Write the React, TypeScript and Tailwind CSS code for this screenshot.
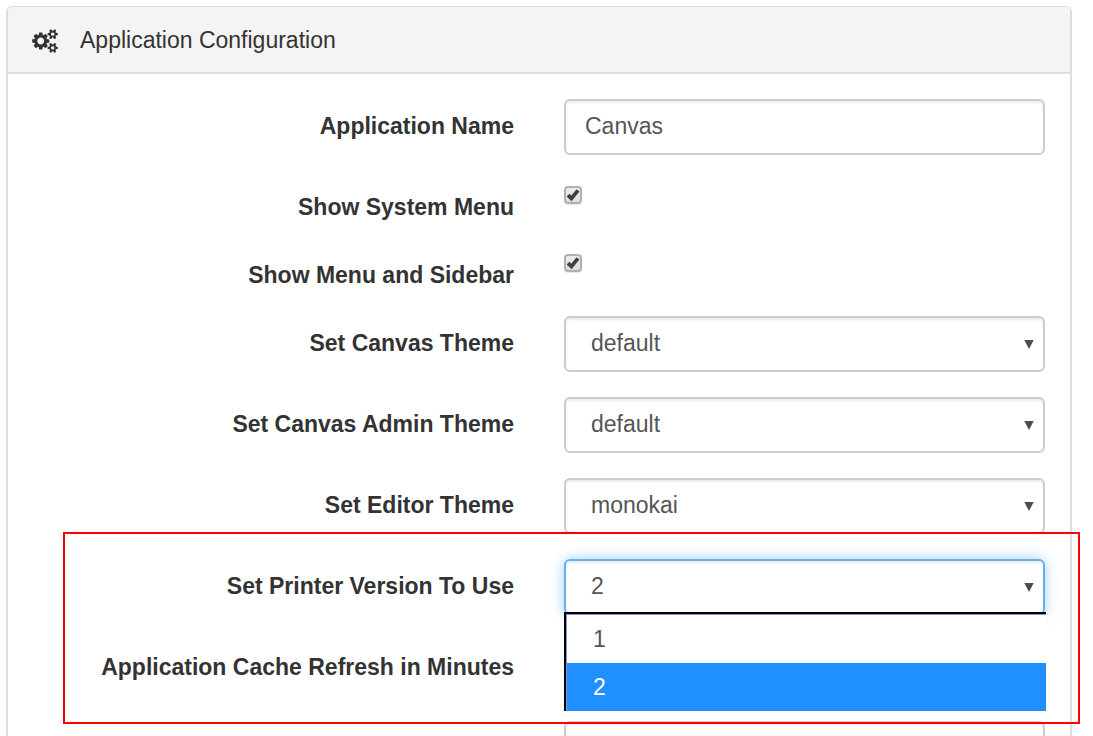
import React from "react";

const controlClass =
  "block h-14 w-full appearance-none rounded-md border-2 border-[#ccc] bg-white pb-0.5 text-[23px] leading-8 text-[#555] shadow-[inset_0_2px_2px_rgba(0,0,0,0.075)] outline-none";

const focusClass =
  "block h-14 w-full appearance-none rounded-md border-2 border-[#66afe9] bg-white pb-0.5 text-[23px] leading-8 text-[#555] shadow-[inset_0_2px_2px_rgba(0,0,0,0.075),0_0_13px_rgba(102,175,233,0.6)] outline-none";

const CogsIcon = () => (
  <svg
    viewBox="0 0 1920 1792"
    className="h-6 w-[26px]"
    fill="currentColor"
    aria-hidden="true"
  >
    <path d="M896 896q0-106-75-181t-181-75-181 75-75 181 75 181 181 75 181-75 75-181zm768 512q0-52-38-90t-90-38-90 38-38 90q0 53 37.5 90.5t90.5 37.5 90.5-37.5 37.5-90.5zm0-1024q0-52-38-90t-90-38-90 38-38 90q0 53 37.5 90.5t90.5 37.5 90.5-37.5 37.5-90.5zm-384 421v185q0 10-7 19.5t-16 10.5l-155 24q-11 35-32 76 34 48 90 115 7 11 7 20 0 12-7 19-23 30-82.5 89.5t-78.5 59.5q-11 0-21-7l-115-90q-37 19-77 31-11 108-23 155-7 24-30 24h-186q-11 0-20-7.5t-10-17.5l-23-153q-34-10-75-31l-118 89q-7 7-20 7-11 0-21-8-144-133-144-160 0-9 7-19 10-14 41-53t47-61q-23-44-35-82l-152-24q-10-1-17-9.5t-7-19.5v-185q0-10 7-19.5t16-10.5l155-24q11-35 32-76-34-48-90-115-7-11-7-20 0-12 7-20 22-30 82-89t79-59q11 0 21 7l115 90q34-18 77-32 11-108 23-154 7-24 30-24h186q11 0 20 7.5t10 17.5l23 153q34 10 75 31l118-89q8-7 20-7 11 0 21 8 144 133 144 160 0 8-7 19-12 16-42 54t-45 60q23 48 34 82l152 23q10 2 17 10.5t7 19.5zm640 533v140q0 16-149 31-12 27-30 52 51 113 51 138 0 4-4 7-122 71-124 71-8 0-46-47t-52-68q-20 2-30 2t-30-2q-14 21-52 68t-46 47q-2 0-124-71-4-3-4-7 0-25 51-138-18-25-30-52-149-15-149-31v-140q0-16 149-31 13-29 30-52-51-113-51-138 0-4 4-7 4-2 35-20t59-34 30-16q8 0 46 46.5t52 67.5q20-2 30-2t30 2q51-71 92-112l6-2q4 0 124 70 4 3 4 7 0 25-51 138 17 23 30 52 149 15 149 31zm0-1024v140q0 16-149 31-12 27-30 52 51 113 51 138 0 4-4 7-122 71-124 71-8 0-46-47t-52-68q-20 2-30 2t-30-2q-14 21-52 68t-46 47q-2 0-124-71-4-3-4-7 0-25 51-138-18-25-30-52-149-15-149-31v-140q0-16 149-31 13-29 30-52-51-113-51-138 0-4 4-7 4-2 35-20t59-34 30-16q8 0 46 46.5t52 67.5q20-2 30-2t30 2q51-71 92-112l6-2q4 0 124 70 4 3 4 7 0 25-51 138 17 23 30 52 149 15 149 31z" />
  </svg>
);

type RowProps = {
  id: string;
  label: string;
  children: React.ReactNode;
};

const Row = ({ id, label, children }: RowProps) => (
  <div className="grid grid-cols-2 gap-[50px] px-[25px]">
    <label
      htmlFor={id}
      className="pt-[11px] text-right text-[23px] leading-8 font-bold whitespace-nowrap text-[#333]"
    >
      {label}
    </label>
    <div className="relative">{children}</div>
  </div>
);

const CheckboxRow = ({ id, label }: { id: string; label: string }) => (
  <Row id={id} label={label}>
    <div className="relative mt-1.5 size-[18px]">
      <input
        id={id}
        type="checkbox"
        defaultChecked
        className="peer block size-[18px] appearance-none rounded-[4px] border-2 border-[#b0b0b0] bg-linear-to-b from-[#ededed] to-[#dcdcdc] shadow-[0_1px_1px_rgba(0,0,0,0.1)]"
      />
      <svg
        viewBox="0 0 18 18"
        className="pointer-events-none absolute inset-0 hidden size-[18px] peer-checked:block"
        aria-hidden="true"
      >
        <path
          d="M4 9.2 L7.4 12.4 L14 4.4"
          fill="none"
          stroke="#404040"
          strokeWidth="3.8"
        />
      </svg>
    </div>
  </Row>
);

type SelectRowProps = {
  id: string;
  label: string;
  options: string[];
  value: string;
  open?: boolean;
};

const SelectRow = ({ id, label, options, value, open }: SelectRowProps) => (
  <Row id={id} label={label}>
    <select
      id={id}
      defaultValue={value}
      className={`${open ? focusClass : controlClass} pr-8 pl-[25px]`}
    >
      {options.map((option) => (
        <option key={option}>{option}</option>
      ))}
    </select>
    <svg
      viewBox="0 0 10 9"
      className="pointer-events-none absolute top-6 right-[11px] h-[9px] w-[10px]"
      aria-hidden="true"
    >
      <path d="M0.3 0h9.4L5 9z" fill="#4d4d4d" />
    </svg>

    {/* Open option list */}
    {open && (
      <ul className="absolute top-[53px] -right-px left-0 z-20 border-t-2 border-l-2 border-black bg-white text-[23px] leading-[48px] text-[#555] shadow-[inset_1px_1px_0_#7d9bd0]">
        {options.map((option) => (
          <li
            key={option}
            className={
              option === value
                ? "ml-px bg-[#1e90ff] pl-[26px] text-white"
                : "ml-px pt-px pl-[26px]"
            }
          >
            {option}
          </li>
        ))}
      </ul>
    )}
  </Row>
);

const App = () => {
  return (
    <main className="h-screen overflow-hidden bg-white pt-1.5 pr-[21px] pl-1.5 font-['Liberation_Sans',Arial,sans-serif]">
      <section className="rounded-t-md border-2 border-t border-[#ddd]">
        <header className="flex items-center gap-[22px] rounded-t border-b-2 border-[#ddd] bg-[#f4f4f4] px-6 pt-[17px] pb-[15px] text-[#333]">
          <CogsIcon />
          <h1 className="text-[23px] leading-[33px]">
            Application Configuration
          </h1>
        </header>

        <form className="flex flex-col gap-[25px] py-[25px]">
          <Row id="app-name" label="Application Name">
            <input
              id="app-name"
              type="text"
              defaultValue="Canvas"
              className={`${controlClass} px-[19px]`}
            />
          </Row>
          <CheckboxRow id="system-menu" label="Show System Menu" />
          <CheckboxRow id="sidebar" label="Show Menu and Sidebar" />
          <SelectRow
            id="theme"
            label="Set Canvas Theme"
            options={["default"]}
            value="default"
          />
          <SelectRow
            id="admin-theme"
            label="Set Canvas Admin Theme"
            options={["default"]}
            value="default"
          />
          <SelectRow
            id="editor-theme"
            label="Set Editor Theme"
            options={["monokai"]}
            value="monokai"
          />

          {/* Highlighted settings */}
          <div className="relative z-10 flex flex-col gap-[25px]">
            <SelectRow
              id="printer"
              label="Set Printer Version To Use"
              options={["1", "2"]}
              value="2"
              open
            />
            <Row id="cache" label="Application Cache Refresh in Minutes">
              <input
                id="cache"
                type="text"
                className={`${controlClass} px-[19px]`}
              />
            </Row>
            <div className="pointer-events-none absolute top-[-27px] -right-2.5 bottom-[-28px] left-[55px] border-2 border-[#f00]" />
          </div>

          <div className="grid grid-cols-2 gap-[50px] px-[25px]">
            <input
              type="text"
              aria-label="Value"
              className={`${controlClass} col-start-2 px-[19px]`}
            />
          </div>
        </form>
      </section>
    </main>
  );
};

export default App;
